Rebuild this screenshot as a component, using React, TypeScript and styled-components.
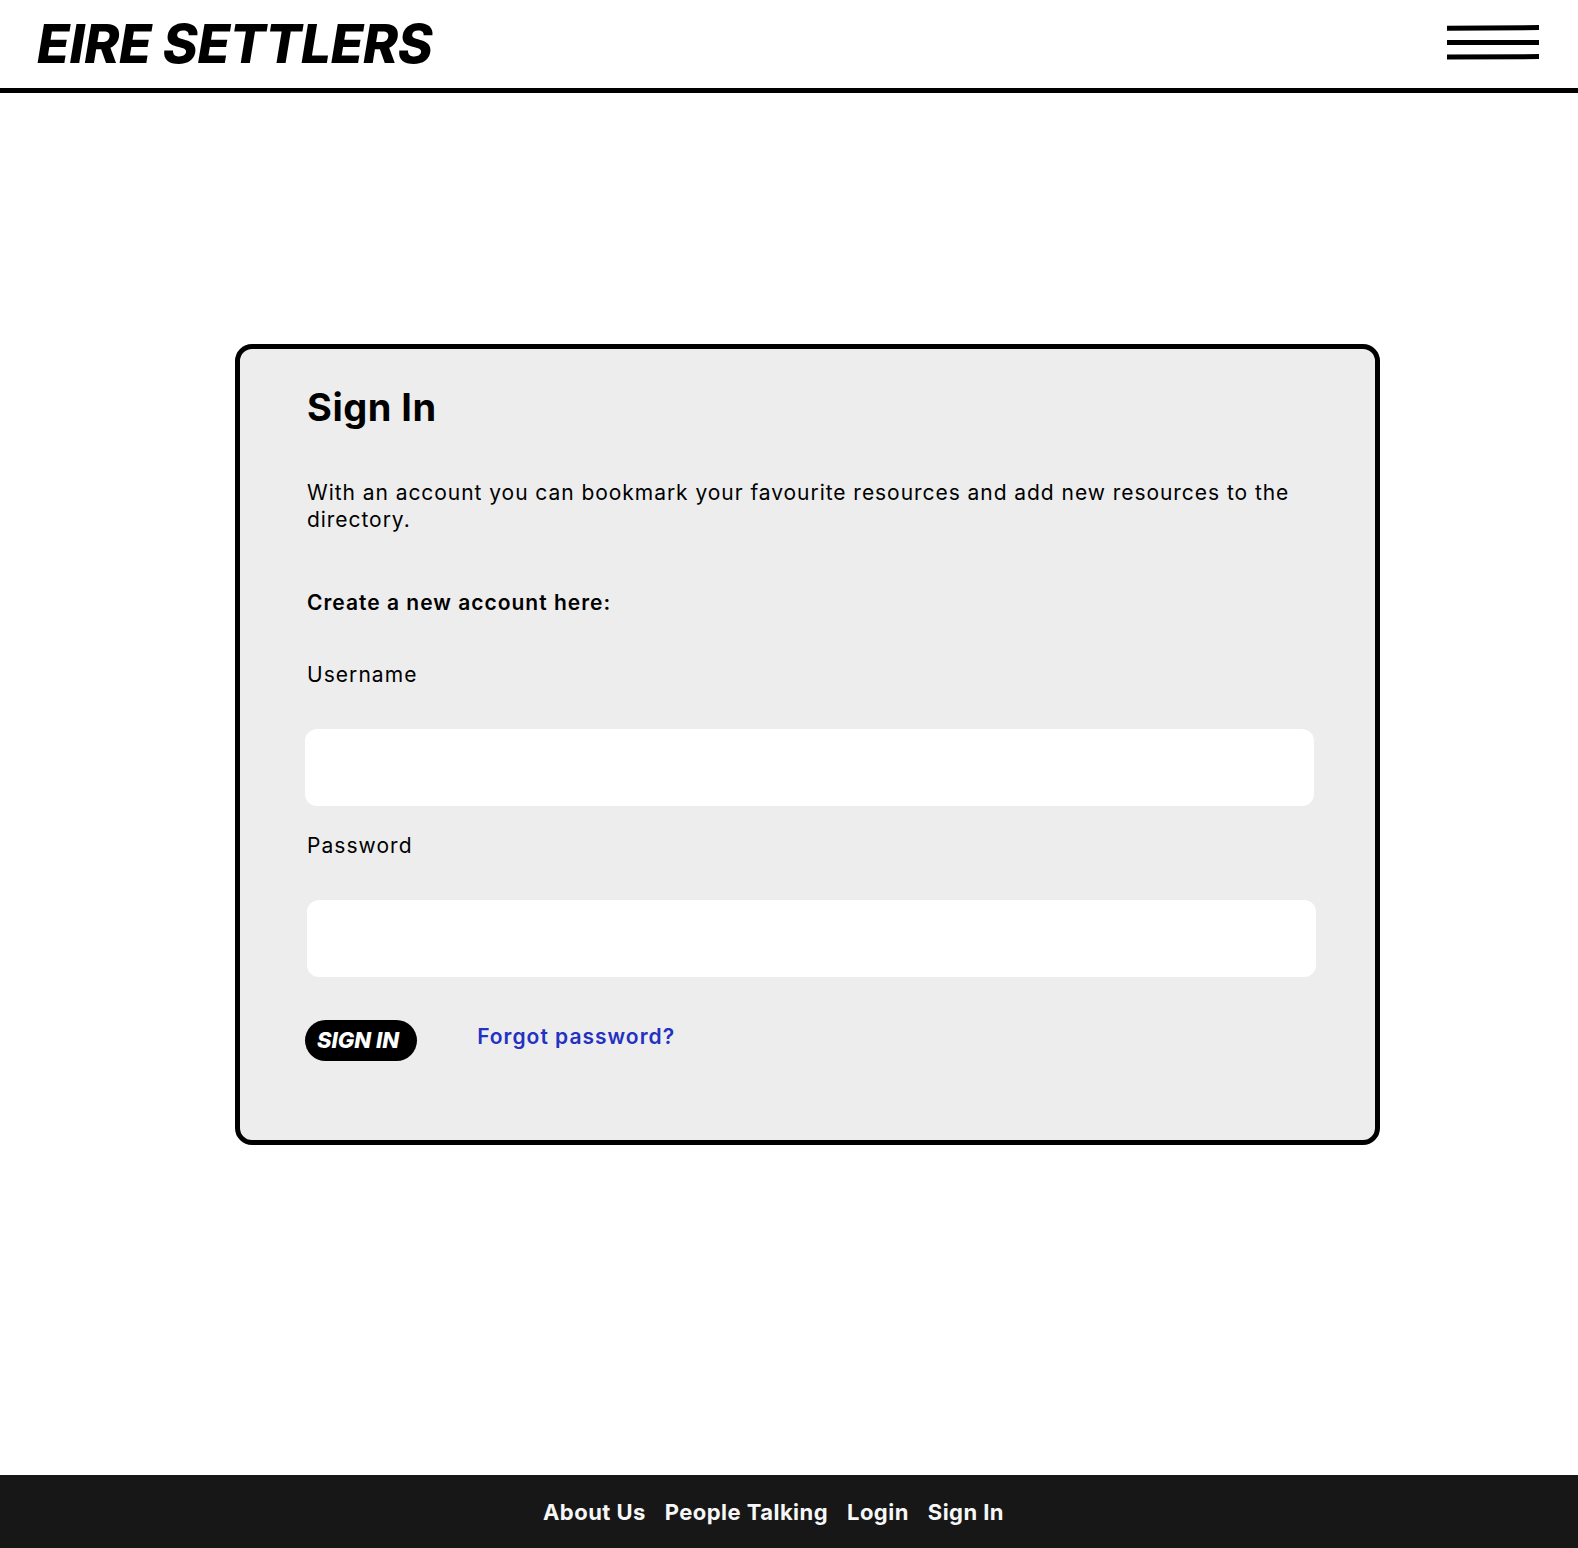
import React from 'react'
import styled, { createGlobalStyle } from 'styled-components'

const GlobalStyle = createGlobalStyle`
  * {
    box-sizing: border-box;
  }

  body {
    margin: 0;
    background: #ffffff;
    font-family: Inter, "Noto Sans", "Liberation Sans", sans-serif;
    color: #000000;
  }
`;

function MenuIcon() {
  return (
    <svg width="94" height="36" viewBox="0 0 94 36" aria-hidden="true">
      <path d="M1 3.2 L93 2.6" stroke="#000" strokeWidth="5" />
      <path d="M1 17.6 L93 17.4" stroke="#000" strokeWidth="5" />
      <path d="M1 32 L93 31.6" stroke="#000" strokeWidth="5" />
    </svg>
  );
}

export default function App() {
  return (
    <Page>
      <GlobalStyle />
      <Header>
        <Logo>EIRE SETTLERS</Logo>
        <MenuButton type="button" aria-label="Menu">
          <MenuIcon />
        </MenuButton>
      </Header>

      <Main>
        <Card>
          <Title>Sign In</Title>
          <Intro>
            With an account you can bookmark your favourite resources and add new resources to the directory.
          </Intro>
          <Subheading>Create a new account here:</Subheading>

          <Label htmlFor="username">Username</Label>
          <TextInput id="username" type="text" $shift={-2} />

          <Label htmlFor="password" $compact>Password</Label>
          <TextInput id="password" type="password" />

          <Actions>
            <SubmitButton type="submit">SIGN IN</SubmitButton>
            <ForgotLink href="#">Forgot password?</ForgotLink>
          </Actions>
        </Card>
      </Main>

      <Footer>
        <FooterNav>
          <FooterLink href="#">About Us</FooterLink>
          <FooterLink href="#">People Talking</FooterLink>
          <FooterLink href="#">Login</FooterLink>
          <FooterLink href="#">Sign In</FooterLink>
        </FooterNav>
      </Footer>
    </Page>
  )
}

const Page = styled.div`
  min-height: 100vh;
  display: flex;
  flex-direction: column;
`;

const Header = styled.header`
  height: 93px;
  display: flex;
  align-items: center;
  justify-content: space-between;
  padding: 0 38px 0 37px;
  border-bottom: 5px solid #000;
`;

const Logo = styled.h1`
  margin: 0;
  font-size: 53px;
  font-weight: 800;
  font-style: italic;
  letter-spacing: -0.3px;
  line-height: 1;
`;

const MenuButton = styled.button`
  display: flex;
  padding: 0;
  border: none;
  background: none;
  margin-top: -3px;
  cursor: pointer;
`;

const Main = styled.main`
  flex: 1;
  padding: 251px 0 0 235px;
`;

const Card = styled.section`
  width: 1145px;
  height: 801px;
  display: flex;
  flex-direction: column;
  align-items: flex-start;
  padding: 35px 60px 0 67px;
  background: #ededed;
  border: 5px solid #000;
  border-radius: 17px;
`;

const Title = styled.h2`
  margin: 0;
  font-size: 38px;
  font-weight: 700;
  letter-spacing: 0.5px;
  line-height: normal;
`;

const Intro = styled.p`
  margin: 49px 0 0;
  font-size: 21px;
  letter-spacing: 0.95px;
  line-height: 27.3px;
`;

const Subheading = styled.h3`
  margin: 56px 0 0;
  font-size: 21px;
  font-weight: 600;
  letter-spacing: 1px;
  line-height: normal;
`;

const Label = styled.label<{ $compact?: boolean }>`
  margin-top: ${p => (p.$compact ? '27px' : '47px')};
  font-size: 21px;
  letter-spacing: 1.05px;
  line-height: normal;
`;

const TextInput = styled.input<{ $shift?: number }>`
  width: 1009px;
  height: 77px;
  margin: 42px 0 0 ${p => p.$shift ?? 0}px;
  padding: 0 20px;
  border: none;
  border-radius: 12px;
  background: #ffffff;
  font: inherit;
  font-size: 20px;
  outline: none;
`;

const Actions = styled.div`
  display: flex;
  align-items: flex-start;
  gap: 60px;
  margin: 43px 0 0 -2px;
`;

const SubmitButton = styled.button`
  height: 41px;
  padding: 0 18px 0 12px;
  border: none;
  border-radius: 21px;
  background: #000;
  color: #fff;
  font-family: inherit;
  font-size: 22px;
  font-weight: 800;
  font-style: italic;
  cursor: pointer;
`;

const ForgotLink = styled.a`
  margin-top: 4px;
  color: #2431c2;
  font-size: 21px;
  font-weight: 600;
  letter-spacing: 1px;
  line-height: normal;
  text-decoration: none;
`;

const Footer = styled.footer`
  height: 73px;
  display: flex;
  align-items: center;
  justify-content: center;
  padding-right: 31px;
  background: #171717;
`;

const FooterNav = styled.nav`
  display: flex;
  gap: 19px;
`;

const FooterLink = styled.a`
  color: #f7f7f7;
  font-size: 22px;
  font-weight: 700;
  letter-spacing: 0.45px;
  text-decoration: none;
`;
